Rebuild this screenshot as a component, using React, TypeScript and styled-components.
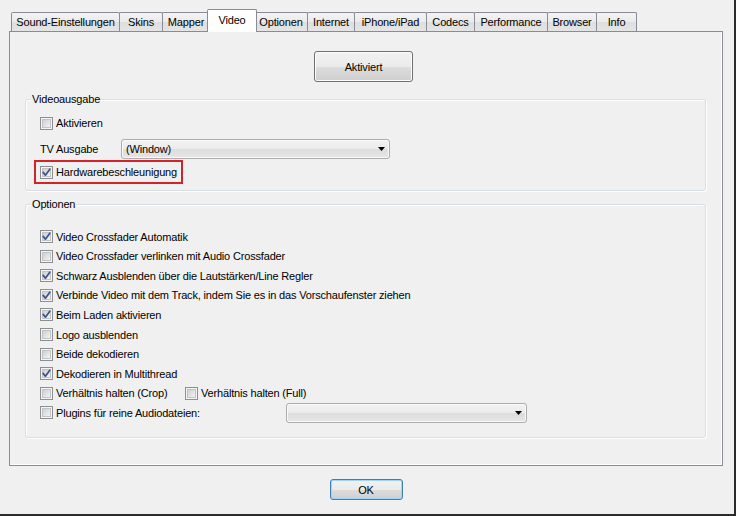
import React from 'react';
import styled, { createGlobalStyle } from 'styled-components';

const GlobalStyle = createGlobalStyle`
  html, body {
    margin: 0;
    padding: 0;
    background: #f0f0f0;
  }
  * {
    box-sizing: border-box;
  }
`;

const Window = styled.div`
  width: 736px;
  height: 516px;
  padding-top: 9px;
  background: #f0f0f0;
  border-right: 2px solid #2b2b2b;
  border-bottom: 2px solid #2b2b2b;
  font-family: 'Liberation Sans', Arial, sans-serif;
  font-size: 11px;
  letter-spacing: -0.17px;
  color: #000;
`;

const TabStrip = styled.div`
  display: flex;
  align-items: flex-end;
  height: 22px;
  margin-left: 11px;
`;

const Tab = styled.div<{ $w: number; $active?: boolean }>`
  position: relative;
  display: flex;
  align-items: center;
  justify-content: center;
  width: ${({ $w, $active }) => ($active ? $w + 4 : $w)}px;
  height: ${({ $active }) => ($active ? 23 : 19)}px;
  margin-left: ${({ $active }) => ($active ? -2 : 0)}px;
  margin-right: ${({ $active }) => ($active ? -3 : -1)}px;
  margin-bottom: ${({ $active }) => ($active ? -1 : 0)}px;
  padding-bottom: ${({ $active }) => ($active ? 3 : 0)}px;
  border: 1px solid #898c95;
  border-bottom: none;
  border-radius: 2px 2px 0 0;
  background: ${({ $active }) =>
    $active ? '#ffffff' : 'linear-gradient(#f3f3f3, #ebebeb 50%, #dedede 51%, #e5e5e5)'};
  z-index: ${({ $active }) => ($active ? 2 : 1)};
  white-space: nowrap;
`;

const Panel = styled.div`
  width: 714px;
  height: 435px;
  margin-left: 9px;
  border: 1px solid #898c95;
  box-shadow: inset -1px -1px 0 #ffffff;
  background: #f0f0f0;
  display: flex;
  flex-direction: column;
`;

const ButtonRow = styled.div`
  display: flex;
  justify-content: center;
  padding-top: 19px;
  padding-right: 5px;
`;

const PushButton = styled.button<{ $w: number; $h: number; $focus?: boolean }>`
  width: ${({ $w }) => $w}px;
  height: ${({ $h }) => $h}px;
  padding: 0;
  font-family: inherit;
  font-size: 11px;
  letter-spacing: inherit;
  color: #000;
  border: 1px solid ${({ $focus }) => ($focus ? '#3c7fb1' : '#707070')};
  border-radius: 3px;
  background: linear-gradient(#f2f2f2, #ebebeb 50%, #dddddd 51%, #cfcfcf);
  box-shadow: inset 0 0 0 1px ${({ $focus }) => ($focus ? '#9fd5f5' : '#fcfcfc')};
`;

const Group = styled.div<{ $top: number; $pt: number; $pb: number }>`
  position: relative;
  margin: ${({ $top }) => $top}px 16px 0 15px;
  padding: ${({ $pt }) => $pt}px 0 ${({ $pb }) => $pb}px 14px;
  border: 1px solid #d5dfe5;
  border-radius: 3px;
  box-shadow: inset 1px 1px 0 #ffffff, 1px 1px 0 #ffffff;
  display: flex;
  flex-direction: column;
`;

const GroupTitle = styled.span`
  position: absolute;
  top: -7px;
  left: 5px;
  padding: 0 1px;
  line-height: 13px;
  background: #f0f0f0;
  color: #000;
`;

const Row = styled.div<{ $h: number; $mt?: number }>`
  display: flex;
  align-items: center;
  height: ${({ $h }) => $h}px;
  margin-top: ${({ $mt }) => $mt || 0}px;
`;

const CheckItem = styled.label<{ $w?: number }>`
  display: flex;
  align-items: center;
  gap: 3px;
  width: ${({ $w }) => ($w ? `${$w}px` : 'auto')};
  flex-shrink: 0;
  white-space: nowrap;
`;

const FieldLabel = styled.span`
  width: 81px;
  flex-shrink: 0;
`;

const Combo = styled.div<{ $w: number }>`
  display: flex;
  align-items: center;
  justify-content: space-between;
  width: ${({ $w }) => $w}px;
  height: 20px;
  padding: 0 4px 0 4px;
  border: 1px solid #acacac;
  border-radius: 3px;
  background: linear-gradient(#f2f2f2, #ebebeb 50%, #dddddd 51%, #e5e5e5);
  box-shadow: inset 0 0 0 1px #fafafa;
`;

const Highlight = styled.div`
  display: flex;
  align-items: center;
  width: 149px;
  height: 24px;
  margin: 1px 0 0 -6px;
  padding-left: 4px;
  border: 2px solid #d2232a;
`;

const Footer = styled.div`
  display: flex;
  justify-content: center;
  width: 714px;
  margin-left: 9px;
  padding-top: 13px;
`;

const CheckBox: React.FC<{ checked?: boolean }> = ({ checked }) => (
  <svg width="13" height="13" viewBox="0 0 13 13" style={{ flexShrink: 0 }}>
    <defs>
      <linearGradient id="cbFill" x1="0" y1="0" x2="1" y2="1">
        <stop offset="0" stopColor="#c9ccd1" />
        <stop offset="1" stopColor="#f6f6f6" />
      </linearGradient>
    </defs>
    <rect x="0.5" y="0.5" width="12" height="12" fill="#f4f4f4" stroke="#8e8f8f" />
    <rect x="2.5" y="2.5" width="8" height="8" fill="url(#cbFill)" stroke="#c0c3c8" />
    {checked && (
      <path d="M3.2 6.4 L5.4 9.2 L9.8 3.2" fill="none" stroke="#3d5285" strokeWidth="1.7" strokeLinecap="round" strokeLinejoin="round" />
    )}
  </svg>
);

const Arrow = () => (
  <svg width="7" height="4" viewBox="0 0 7 4">
    <path d="M0 0 H7 L3.5 4 Z" fill="#000" />
  </svg>
);

const tabs = [
  { label: 'Sound-Einstellungen', w: 109 },
  { label: 'Skins', w: 44 },
  { label: 'Mapper', w: 48 },
  { label: 'Video', w: 46, active: true },
  { label: 'Optionen', w: 54 },
  { label: 'Internet', w: 48 },
  { label: 'iPhone/iPad', w: 73 },
  { label: 'Codecs', w: 49 },
  { label: 'Performance', w: 74 },
  { label: 'Browser', w: 50 },
  { label: 'Info', w: 41 },
];

const options = [
  { label: 'Video Crossfader Automatik', checked: true },
  { label: 'Video Crossfader verlinken mit Audio Crossfader', checked: false },
  { label: 'Schwarz Ausblenden über die Lautstärken/Line Regler', checked: true },
  { label: 'Verbinde Video mit dem Track, indem Sie es in das Vorschaufenster ziehen', checked: true },
  { label: 'Beim Laden aktivieren', checked: true },
  { label: 'Logo ausblenden', checked: false },
  { label: 'Beide dekodieren', checked: false },
  { label: 'Dekodieren in Multithread', checked: true },
];

const ROW_H = 19.56;

export const App: React.FC = () => {
  return (
    <Window>
      <GlobalStyle />
      <TabStrip>
        {tabs.map((t) => (
          <Tab key={t.label} $w={t.w} $active={t.active}>
            {t.label}
          </Tab>
        ))}
      </TabStrip>
      <Panel>
        <ButtonRow>
          <PushButton $w={99} $h={31}>
            Aktiviert
          </PushButton>
        </ButtonRow>

        <Group $top={17} $pt={13} $pb={6}>
          <GroupTitle>Videoausgabe</GroupTitle>
          <Row $h={20}>
            <CheckItem>
              <CheckBox />
              Aktivieren
            </CheckItem>
          </Row>
          <Row $h={20} $mt={6}>
            <FieldLabel>TV Ausgabe</FieldLabel>
            <Combo $w={269}>
              <span>(Window)</span>
              <Arrow />
            </Combo>
          </Row>
          <Highlight>
            <CheckItem>
              <CheckBox checked />
              Hardwarebeschleunigung
            </CheckItem>
          </Highlight>
        </Group>

        <Group $top={13} $pt={22} $pb={15}>
          <GroupTitle>Optionen</GroupTitle>
          {options.map((o) => (
            <Row key={o.label} $h={ROW_H}>
              <CheckItem>
                <CheckBox checked={o.checked} />
                {o.label}
              </CheckItem>
            </Row>
          ))}
          <Row $h={ROW_H}>
            <CheckItem $w={145}>
              <CheckBox />
              Verhältnis halten (Crop)
            </CheckItem>
            <CheckItem>
              <CheckBox />
              Verhältnis halten (Full)
            </CheckItem>
          </Row>
          <Row $h={ROW_H}>
            <CheckItem $w={246}>
              <CheckBox />
              Plugins für reine Audiodateien:
            </CheckItem>
            <Combo $w={241}>
              <span />
              <Arrow />
            </Combo>
          </Row>
        </Group>
      </Panel>
      <Footer>
        <PushButton $w={73} $h={21} $focus>
          OK
        </PushButton>
      </Footer>
    </Window>
  );
};

export default App;
